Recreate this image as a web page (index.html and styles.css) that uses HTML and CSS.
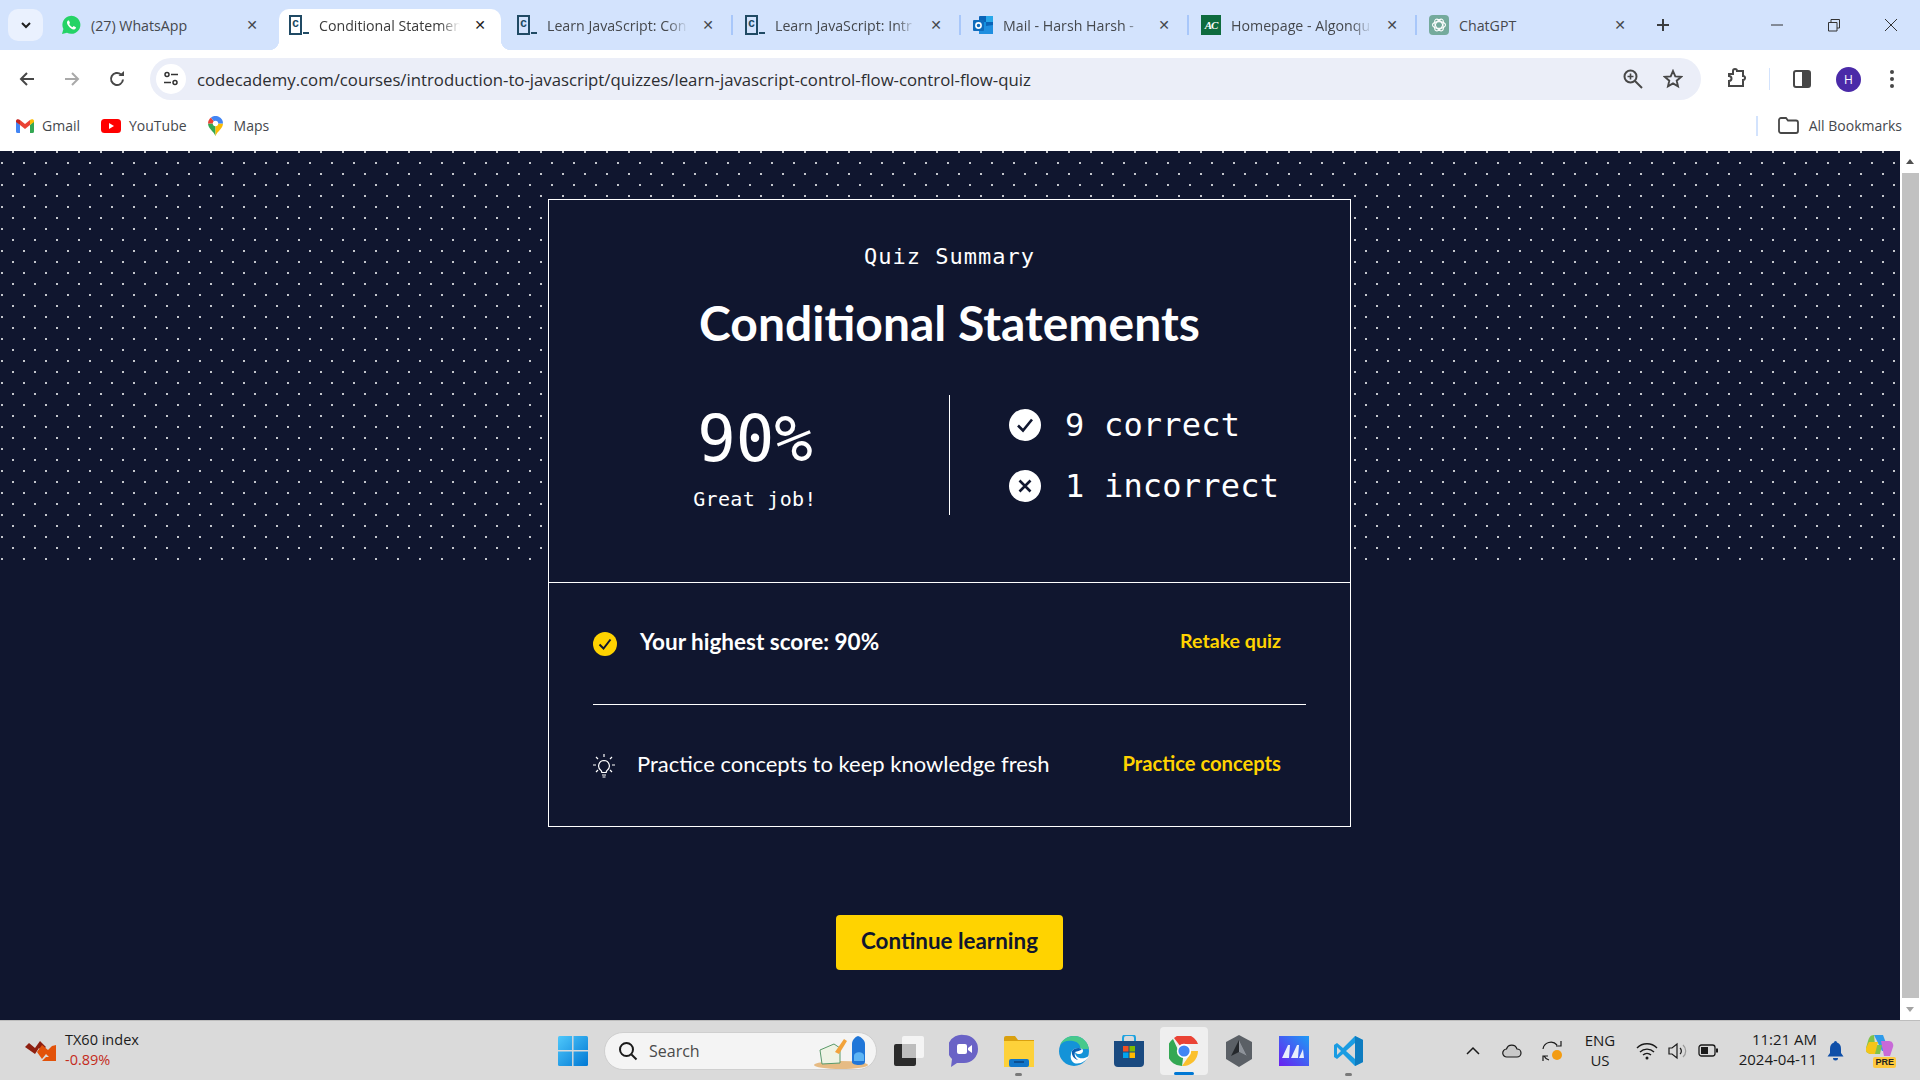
FILE: index.html
```html
<!DOCTYPE html>
<html>
	<head>
		<meta charset="utf-8" />
		<title>Conditional Statements</title>
		<link rel="stylesheet" href="styles.css">
	</head>
	<body>
	<!-- browser tabs -->
	<div class="tabstrip">
		<div class="tab-search"><svg width="14" height="14" viewBox="0 0 14 14"><path d="M3 5l4 4 4-4" fill="none" stroke="#1f1f1f" stroke-width="2"/></svg></div>
		<div class="tab">
			<svg class="fav" width="20" height="20" viewBox="0 0 20 20"><path d="M1 19l1.400-5A9 9 0 1 1 6 17.700z" fill="#25d366"/><path d="M7 5.500c-1.500 1-1.400 3 .5 5.500s4 3.800 5.800 3.400c1.300-.3 1.800-1.400 1.600-2.200l-2.300-1.100-1 1.200c-1.300-.5-2.700-1.800-3.400-3.200l.8-1.100-1-2.400z" fill="#fff"/></svg>
			<span class="tab-title">(27) WhatsApp</span><span class="tab-x">✕</span>
		</div>
		<div class="tab active">
			<span class="fav cc"><b>c</b><i></i></span>
			<span class="tab-title fade">Conditional Statemen</span><span class="tab-x">✕</span>
		</div>
		<div class="tab sep">
			<span class="fav cc"><b>c</b><i></i></span>
			<span class="tab-title fade">Learn JavaScript: Con</span><span class="tab-x">✕</span>
		</div>
		<div class="tab sep">
			<span class="fav cc"><b>c</b><i></i></span>
			<span class="tab-title fade">Learn JavaScript: Intr</span><span class="tab-x">✕</span>
		</div>
		<div class="tab sep">
			<svg class="fav" width="20" height="20" viewBox="0 0 20 20"><rect x="6" y="1" width="14" height="18" rx="1" fill="#0a64b8"/><rect x="13" y="1" width="7" height="6" fill="#28a8ea"/><rect x="6" y="7" width="7" height="6" fill="#1490df"/><path d="M6 12l14-2v9H6z" fill="#1f8fe0"/><rect x="0" y="5" width="11" height="11" rx="1" fill="#0f6cbd"/><circle cx="5.500" cy="10.500" r="2.600" fill="none" stroke="#fff" stroke-width="1.600"/></svg>
			<span class="tab-title fade">Mail - Harsh Harsh - </span><span class="tab-x">✕</span>
		</div>
		<div class="tab sep">
			<span class="fav ac">AC</span>
			<span class="tab-title fade">Homepage - Algonqu</span><span class="tab-x">✕</span>
		</div>
		<div class="tab sep">
			<svg class="fav" width="20" height="20" viewBox="0 0 20 20"><rect width="20" height="20" rx="4" fill="#74aa9c"/><g fill="none" stroke="#fff" stroke-width="1.100"><ellipse cx="10" cy="10" rx="6.500" ry="3.400"/><ellipse cx="10" cy="10" rx="6.500" ry="3.400" transform="rotate(60 10 10)"/><ellipse cx="10" cy="10" rx="6.500" ry="3.400" transform="rotate(120 10 10)"/></g></svg>
			<span class="tab-title">ChatGPT</span><span class="tab-x">✕</span>
		</div>
		<div class="new-tab"><svg width="16" height="16" viewBox="0 0 16 16"><path d="M8 2v12M2 8h12" stroke="#3b3d40" stroke-width="2"/></svg></div>
		<div class="win-controls">
			<svg width="14" height="14" viewBox="0 0 14 14"><path d="M1 7h12" stroke="#333" stroke-width="1"/></svg>
			<svg width="14" height="14" viewBox="0 0 14 14"><path d="M1.500 4.500h8.500v8.500H1.500zM4 4.500V1.500h8.500V10H10" fill="none" stroke="#333" stroke-width="1"/></svg>
			<svg width="14" height="14" viewBox="0 0 14 14"><path d="M1 1l12 12M13 1L1 13" stroke="#333" stroke-width="1"/></svg>
		</div>
	</div>

	<!-- address bar -->
	<div class="toolbar">
		<div class="nav-icons">
			<svg width="18" height="18" viewBox="0 0 18 18"><path d="M16 9H3M9 3L3 9l6 6" fill="none" stroke="#474747" stroke-width="2"/></svg>
			<svg width="18" height="18" viewBox="0 0 18 18"><path d="M2 9h13M9 3l6 6-6 6" fill="none" stroke="#a9a9a9" stroke-width="2"/></svg>
			<svg width="18" height="18" viewBox="0 0 18 18"><path d="M15 9.500A6 6 0 1 1 13 4.500" fill="none" stroke="#474747" stroke-width="2"/><path d="M10.500 6H16V1z" fill="#474747"/></svg>
		</div>
		<div class="omnibox">
			<span class="tune"><svg width="16" height="16" viewBox="0 0 16 16"><circle cx="4" cy="3.500" r="2" fill="none" stroke="#333" stroke-width="1.500"/><path d="M8 3.500h7M1 11.500h7" stroke="#333" stroke-width="1.500"/><circle cx="12" cy="11.500" r="2" fill="none" stroke="#333" stroke-width="1.500"/></svg></span>
			<span class="url">codecademy.com/courses/introduction-to-javascript/quizzes/learn-javascript-control-flow-control-flow-quiz</span>
			<svg class="zoom-ic" width="22" height="22" viewBox="0 0 22 22"><circle cx="8.500" cy="8.500" r="6" fill="none" stroke="#474747" stroke-width="2"/><path d="M13 13l7 7" stroke="#474747" stroke-width="2"/><path d="M8.500 5.500v6M5.500 8.500h6" stroke="#474747" stroke-width="1.600"/></svg>
			<svg width="20" height="20" viewBox="0 0 20 20"><path d="M10 2l2.300 5.400 5.800.5-4.400 3.800 1.300 5.700-5-3-5 3 1.300-5.700L1.900 7.900l5.800-.5z" fill="none" stroke="#474747" stroke-width="1.900"/></svg>
		</div>
		<div class="tool-icons">
			<svg width="22" height="22" viewBox="0 0 22 22"><path d="M3 7h4V4a2 2 0 0 1 4 0v0h6v5a2 2 0 0 1 2 2.500 2 2 0 0 1-2 1.500v6H3v-5a2.500 2.500 0 0 0 0-5z" transform="translate(0 -1)" fill="none" stroke="#474747" stroke-width="2"/></svg>
			<span class="tool-sep"></span>
			<svg width="20" height="20" viewBox="0 0 20 20"><rect x="2" y="2" width="16" height="16" rx="2" fill="none" stroke="#474747" stroke-width="2"/><rect x="10" y="2" width="8" height="16" fill="#474747"/></svg>
			<span class="avatar">H</span>
			<svg width="6" height="20" viewBox="0 0 6 20"><circle cx="3" cy="3" r="2" fill="#474747"/><circle cx="3" cy="10" r="2" fill="#474747"/><circle cx="3" cy="17" r="2" fill="#474747"/></svg>
		</div>
	</div>

	<!-- bookmarks -->
	<div class="bookmarks">
		<div class="bm bm-gmail">
			<svg width="18" height="14" viewBox="0 0 18 14"><path d="M0 2v10.500A1.500 1.500 0 0 0 1.500 14H4V6z" fill="#4285f4"/><path d="M18 2v10.500a1.500 1.500 0 0 1-1.500 1.500H14V6z" fill="#34a853"/><path d="M4 6l5 4 5-4V1l-5 4-5-4z" fill="#ea4335"/><path d="M0 2c0-2 2.500-2.500 4-1v5L0 3z" fill="#c5221f"/><path d="M18 2c0-2-2.500-2.500-4-1v5l4-3z" fill="#fbbc04"/></svg>
			<span>Gmail</span>
		</div>
		<div class="bm bm-yt">
			<svg width="20" height="14" viewBox="0 0 20 14"><rect width="20" height="14" rx="3.500" fill="#f00"/><path d="M8 4l5 3-5 3z" fill="#fff"/></svg>
			<span>YouTube</span>
		</div>
		<div class="bm bm-maps">
			<svg width="15" height="20" viewBox="0 0 15 20"><path d="M7.500 20C6 15.500 0 12.500 0 7.500L7.500 7.500z" fill="#34a853"/><path d="M7.500 20c1.500-4.500 7.500-7.500 7.500-12.500H7.500z" fill="#fbbc04"/><path d="M0 7.500A7.500 7.500 0 0 1 3 1.500L7.500 7.500z" fill="#ea4335"/><path d="M3 1.500A7.500 7.500 0 0 1 15 7.500H7.500z" fill="#4285f4"/><circle cx="7.500" cy="7.500" r="2.700" fill="#fff"/></svg>
			<span>Maps</span>
		</div>
		<div class="bm-all">
			<span class="bm-sep"></span>
			<svg width="21" height="17" viewBox="0 0 21 17"><path d="M1 3a2 2 0 0 1 2-2h5l2 2.500h8a2 2 0 0 1 2 2V14a2 2 0 0 1-2 2H3a2 2 0 0 1-2-2z" fill="none" stroke="#474747" stroke-width="1.800"/></svg>
			<span>All Bookmarks</span>
		</div>
	</div>

	<div class="viewport">
		<div class="main">
			<div class="dots"></div>
			<div class="card">
				<div class="card-top">
					<div class="quiz-label">Quiz Summary</div>
					<h1 class="quiz-title">Conditional Statements</h1>
					<div class="stats">
						<div class="score">
							<div class="score-num">90%</div>
							<div class="score-note">Great job!</div>
						</div>
						<div class="tally">
							<div class="tally-row">
								<svg width="32" height="32" viewBox="0 0 32 32"><circle cx="16" cy="16" r="16" fill="#fff"/><path d="M9 16.500l5 5 9-11" fill="none" stroke="#10162f" stroke-width="2.600"/></svg>
								<span>9 correct</span>
							</div>
							<div class="tally-row">
								<svg width="32" height="32" viewBox="0 0 32 32"><circle cx="16" cy="16" r="16" fill="#fff"/><path d="M10.500 10.500l11 11M21.500 10.500l-11 11" fill="none" stroke="#10162f" stroke-width="2.600"/></svg>
								<span>1 incorrect</span>
							</div>
						</div>
					</div>
				</div>
				<div class="card-bottom">
					<div class="row row-first">
						<svg width="24" height="24" viewBox="0 0 24 24"><circle cx="12" cy="12" r="12" fill="#ffd300"/><path d="M6.500 12.500l4 4 7-9" fill="none" stroke="#10162f" stroke-width="2"/></svg>
						<span class="row-text strong">Your highest score: 90%</span>
						<a class="row-link">Retake quiz</a>
					</div>
					<div class="row">
						<svg class="bulb" width="22" height="24" viewBox="0 0 22 24"><path d="M11 6.500a5.500 5.500 0 0 0-3 10c.6.5.8 1 .8 2h4.400c0-1 .2-1.500.8-2a5.500 5.500 0 0 0-3-10z" fill="none" stroke="#fff" stroke-width="1.200"/><path d="M9 21h4M9.500 23h3M11 0v3M3 3l2 2M19 3l-2 2M0 11h3M19 11h3M3 18l2-2M19 18l-2-2" stroke="#fff" stroke-width="1.200"/></svg>
						<span class="row-text">Practice concepts to keep knowledge fresh</span>
						<a class="row-link">Practice concepts</a>
					</div>
				</div>
			</div>
			<button class="continue">Continue learning</button>
		</div>
		<div class="scrollbar">
			<svg width="20" height="20" viewBox="0 0 20 20"><path d="M6 13l4-5 4 5z" fill="#505050"/></svg>
			<div class="thumb"></div>
			<svg width="20" height="20" viewBox="0 0 20 20"><path d="M6 7l4 5 4-5z" fill="#a3a3a3"/></svg>
		</div>
	</div>

	<!-- windows taskbar -->
	<div class="taskbar">
		<div class="widget">
			<svg width="32" height="22" viewBox="0 0 32 22"><path d="M0 7l4-4 6 5 5-7 6 6-4 4-3-3-4 6z" fill="#8e1f10"/><path d="M12 12l5-7 6 5 4-4 4-1v16H17l4-4 3 0-3-3-4 5z" fill="#e2520a"/></svg>
			<div class="widget-text">
				<div>TX60 index</div>
				<div class="widget-red">-0.89%</div>
			</div>
		</div>
		<div class="task-center">
			<svg class="win-logo" width="30" height="30" viewBox="0 0 30 30"><defs><linearGradient id="w1" x1="0" y1="0" x2="1" y2="1"><stop offset="0" stop-color="#4fc8fb"/><stop offset="1" stop-color="#0078d4"/></linearGradient></defs><rect width="30" height="30" rx="1.500" fill="url(#w1)"/><path d="M14.800 0v30M0 14.800h30" stroke="#dadada" stroke-width="1.400"/></svg>
			<div class="search">
				<svg width="20" height="20" viewBox="0 0 20 20"><circle cx="8.500" cy="8.500" r="6.500" fill="none" stroke="#1a1a1a" stroke-width="2"/><path d="M13.500 13.500l5 5" stroke="#1a1a1a" stroke-width="2"/></svg>
				<span>Search</span>
				<svg class="search-art" width="56" height="38" viewBox="0 0 56 38"><ellipse cx="27" cy="33" rx="27" ry="4" fill="#e6bb84"/><path d="M6 18l14-6 6 4v15l-18 1z" fill="#eef3e4" stroke="#5a9a6a"/><path d="M21 20l9-13 3 2-8 13z" fill="#f2a33b"/><path d="M38 30V12c0-4 3-7 6-8 3 1 7 4 7 8v18c0 2-2 3-6 3s-7-1-7-3z" fill="#1f76d8"/><path d="M40 24c0-5 10-5 10 0v5H40z" fill="#5db4f4"/></svg>
			</div>
			<div class="slot slot-first">
				<svg width="30" height="30" viewBox="0 0 30 30"><rect x="8" y="0" width="22" height="22" rx="2" fill="#f4f4f4"/><path d="M0 10a2 2 0 0 1 2-2h6v14h14v6a2 2 0 0 1-2 2H2a2 2 0 0 1-2-2z" fill="#2b2b2b"/><rect x="8" y="8" width="14" height="14" fill="#bdbdbd"/></svg>
			</div>
			<div class="slot">
				<svg width="30" height="34" viewBox="0 0 30 34"><path d="M15 1a14 14 0 0 1 0 28H8l-6 4 1-8A14 14 0 0 1 15 1z" fill="#6a63c6"/><rect x="8" y="10" width="10" height="10" rx="2" fill="#fff"/><path d="M19 14l4-3v8l-4-3z" fill="#fff"/></svg>
			</div>
			<div class="slot slot-open">
				<svg width="30" height="32" viewBox="0 0 30 32"><path d="M0 3a2 2 0 0 1 2-2h9l3 4h16v6H0z" fill="#d9a00f"/><path d="M0 6h30v26H0z" fill="#fdd13a"/><rect x="5" y="24" width="20" height="8" rx="2" fill="#1176c9"/><rect x="10" y="26" width="10" height="2" fill="#0b4f92"/></svg>
			</div>
			<div class="slot">
				<svg width="30" height="30" viewBox="0 0 30 30"><circle cx="15" cy="15" r="15" fill="#1493d8"/><path d="M30 15c0-9-7-15-15-15C8 0 3 4 1 9c3-4 8-5 13-4 5 1 8 4 7 8h9z" fill="#47c98b"/><path d="M12 18c0-4 4-6 8-6 4 0 5 3 3 5s-6 1-7-1c0 5 6 9 14 4-3 5-9 9-15 7-3-2-4-5-3-9z" fill="#fff"/><path d="M13 15c2-3 7-4 10-2-2 2-5 2-7 3-1 3 0 6 3 8-4-1-7-5-6-9z" fill="#0b5fb4"/></svg>
			</div>
			<div class="slot">
				<svg width="30" height="32" viewBox="0 0 30 32"><path d="M9 6V3a3 3 0 0 1 3-3h6a3 3 0 0 1 3 3v3" fill="none" stroke="#1ea3e0" stroke-width="2"/><path d="M0 6h30v22a4 4 0 0 1-4 4H4a4 4 0 0 1-4-4z" fill="#1a4a80"/><rect x="9" y="11" width="5.500" height="5.500" fill="#f25022"/><rect x="15.500" y="11" width="5.500" height="5.500" fill="#7fba00"/><rect x="9" y="17.500" width="5.500" height="5.500" fill="#00a4ef"/><rect x="15.500" y="17.500" width="5.500" height="5.500" fill="#ffb900"/></svg>
			</div>
			<div class="slot slot-active">
				<svg width="30" height="30" viewBox="0 0 30 30"><path d="M15 15L5 2A15 15 0 0 1 29 8H15z" fill="#ea4335"/><path d="M15 15H29A15 15 0 0 1 13 30l7-10z" fill="#fbc02d"/><path d="M15 15l-2 15A15 15 0 0 1 4 3l6 13z" fill="#34a853"/><circle cx="15" cy="15" r="7.200" fill="#fff"/><circle cx="15" cy="15" r="5.600" fill="#4285f4"/></svg>
			</div>
			<div class="slot">
				<svg width="28" height="32" viewBox="0 0 28 32"><path d="M14 0l13 7v17l-13 8-13-8V7z" fill="#5b6066"/><path d="M14 5l8 16-8-4-8 4z" fill="#25282c"/><path d="M14 5l8 16-8-4z" fill="#8e939a"/></svg>
			</div>
			<div class="slot">
				<svg width="30" height="30" viewBox="0 0 30 30"><defs><linearGradient id="m1" x1="0" y1="1" x2="1" y2="0"><stop offset="0" stop-color="#6a1ff0"/><stop offset="1" stop-color="#1e9bf5"/></linearGradient></defs><rect width="30" height="30" fill="url(#m1)"/><path d="M3 22l6-13h2l-1 13zM12 22l6-13h2l-1 13zM20 22l4-9 1 9z" fill="#e7eefc"/></svg>
			</div>
			<div class="slot slot-open">
				<svg width="30" height="30" viewBox="0 0 30 30"><path d="M21 0l8 4v22l-8 4L9 18l-6 5-3-2V9l3-2 6 5z" fill="#1a9ce2"/><path d="M21 0l8 4v22l-8 4z" fill="#0e7cc0"/><path d="M21 7v16l-9-8z" fill="#d9d9d9"/><path d="M3 11v8l4-4z" fill="#d9d9d9"/></svg>
			</div>
		</div>
		<div class="tray">
			<svg class="tray-chev" width="14" height="9" viewBox="0 0 14 9"><path d="M1 8l6-6 6 6" fill="none" stroke="#1a1a1a" stroke-width="1.500"/></svg>
			<svg class="tray-cloud" width="20" height="14" viewBox="0 0 20 14"><path d="M5 13a4 4 0 0 1-.5-8A5.500 5.500 0 0 1 15 5a4 4 0 0 1 0 8z" fill="#c9c9c9" stroke="#1a1a1a" stroke-width="1.200"/></svg>
			<svg class="tray-sync" width="22" height="22" viewBox="0 0 22 22"><path d="M2 9a8 8 0 0 1 14-4M20 1v5h-5M2 21v-5h5M3 16a8 8 0 0 0 5 4" fill="none" stroke="#1a1a1a" stroke-width="1.200"/><circle cx="16" cy="15" r="5" fill="#f39c12"/></svg>
			<div class="lang"><div>ENG</div><div>US</div></div>
			<svg class="tray-wifi" width="22" height="18" viewBox="0 0 22 18"><path d="M1 6a14 14 0 0 1 20 0M4 10a10 10 0 0 1 14 0M7 13a6 6 0 0 1 8 0" fill="none" stroke="#1a1a1a" stroke-width="1.400"/><circle cx="11" cy="16" r="1.500" fill="#1a1a1a"/></svg>
			<svg class="tray-vol" width="20" height="18" viewBox="0 0 20 18"><path d="M1 6h3l5-4v14l-5-4H1z" fill="none" stroke="#1a1a1a" stroke-width="1.200"/><path d="M12 6a4 4 0 0 1 0 6" fill="none" stroke="#1a1a1a" stroke-width="1.200"/><path d="M15 3a8 8 0 0 1 0 12" fill="none" stroke="#9a9a9a" stroke-width="1.200"/></svg>
			<svg class="tray-batt" width="20" height="13" viewBox="0 0 20 13"><rect x="1" y="1" width="16" height="11" rx="2.500" fill="none" stroke="#1a1a1a" stroke-width="1.300"/><rect x="3" y="3" width="7" height="7" fill="#1a1a1a"/><rect x="18" y="4.500" width="2" height="4" fill="#1a1a1a"/></svg>
			<div class="clock"><div>11:21 AM</div><div>2024-04-11</div></div>
			<svg class="tray-bell" width="17" height="20" viewBox="0 0 17 20"><path d="M8.500 0a1.500 1.500 0 0 1 1.500 1.500C13 2.500 14 5 14 8v4l2.500 3.500H.5L3 12V8c0-3 1-5.500 4-6.500A1.500 1.500 0 0 1 8.500 0z" fill="#0f4fa8"/><path d="M6 17h5a2.500 2.500 0 0 1-5 0z" fill="#0f4fa8"/></svg>
			<div class="copilot">
				<svg width="28" height="26" viewBox="0 0 28 26"><path d="M8 1h9l6 16h-7z" fill="#2f9bea"/><path d="M15 7h8c3 0 5 3 4 6l-3 9h-6z" fill="#c86ad8"/><path d="M8 1C4 1 3 4 2 7L0 14c-1 4 2 6 5 6h9l2-9H9z" fill="#7fc34b"/><path d="M0 14l3-6h9l-3 12H5c-3 0-6-2-5-6z" fill="#f5c518"/></svg>
				<span class="pre">PRE</span>
			</div>
		</div>
	</div>
	</body>
</html>
```

FILE: styles.css
```css
*{margin: 0;padding: 0;box-sizing: border-box;}
html,body{width: 1920px;height: 1080px;overflow: hidden;}
body{display: flex;flex-direction: column;font-family: "Open Sans",sans-serif;background: #fff;}

/* tabs */
.tabstrip{height: 50px;background: #d3e3fd;display: flex;align-items: flex-start;flex: none;}
.tab-search{width: 35px;height: 32px;margin: 9px 4px 0 8px;border-radius: 10px;background: #eaf1fe;display: flex;align-items: center;justify-content: center;flex: none;}
.tab{width: 228px;height: 41px;margin-top: 9px;padding: 0 9px 9px 14px;display: flex;align-items: center;position: relative;flex: none;color: #45484d;}
.tab.active{background: #fff;color: #3a3a3a;border-radius: 10px 10px 0 0;width: 222px;margin-left: 4px;margin-right: 2px;padding-left: 10px;padding-right: 7px;}
.tab.active:before,.tab.active:after{content: "";position: absolute;bottom: 0;width: 10px;height: 10px;background: radial-gradient(circle at 0 0,transparent 10px,#fff 10.500px);}
.tab.active:before{left: -10px;}
.tab.active:after{right: -10px;transform: scaleX(-1);}
.tab.sep:before{content: "";position: absolute;left: 0;top: 6px;width: 2px;height: 20px;background: #a8c7fa;}
.tab.active + .tab.sep:before{display: none;}
.fav{flex: none;margin-right: 10px;}
.cc{width: 20px;height: 20px;display: flex;align-items: flex-end;}
.cc b{width: 13px;height: 20px;border: 2px solid #204a64;font: bold 12px/15px "Liberation Mono",monospace;text-align: center;color: #204a64;}
.cc i{width: 6px;height: 2px;background: #204a64;margin-left: 1px;margin-bottom: 1px;}
.ac{width: 20px;height: 20px;background: #0e6b3e;color: #fff;font: bold italic 11px/20px "Liberation Serif",serif;text-align: center;letter-spacing: -1px;}
.tab-title{flex: 1;font-size: 14.200px;white-space: nowrap;overflow: hidden;}
.tab-title.fade{-webkit-mask-image: linear-gradient(to right,#000 82%,transparent 96%);mask-image: linear-gradient(to right,#000 82%,transparent 96%);}
.tab-x{width: 28px;flex: none;text-align: center;font: 14px "DejaVu Sans",sans-serif;color: #45484d;}
.tab.active .tab-x{color: #1f1f1f;}
.new-tab{width: 30px;height: 41px;margin-top: 9px;margin-left: 5px;display: flex;align-items: center;justify-content: center;flex: none;position: relative;}
.new-tab svg{margin-top: -10px;}
.win-controls{margin-left: auto;width: 150px;height: 50px;display: flex;align-items: center;justify-content: space-between;padding: 0 22px 0 0;}

/* address bar */
.toolbar{height: 50px;background: #fff;border-radius: 12px 12px 0 0;display: flex;align-items: flex-start;flex: none;padding-top: 8px;}
.nav-icons{width: 150px;height: 42px;padding: 0 24px 0 18px;display: flex;align-items: center;justify-content: space-between;flex: none;}
.omnibox{width: 1551px;height: 42px;border-radius: 21px;background: #ebeef8;display: flex;align-items: center;padding: 0 18px 0 6px;flex: none;}
.tune{width: 30px;height: 30px;border-radius: 50%;background: #fff;display: flex;align-items: center;justify-content: center;flex: none;margin-right: 11px;}
.url{flex: 1;font-size: 16.750px;color: #2b2d31;white-space: nowrap;margin-top: 1px;}
.zoom-ic{margin-right: 19px;}
.tool-icons{flex: 1;height: 42px;display: flex;align-items: center;padding: 0 0 0 25px;}
.tool-sep{width: 1px;height: 22px;background: #d3e3fd;margin: 0 22px 0 21px;}
.avatar{width: 25px;height: 25px;border-radius: 50%;background: #4a2aa8;color: #fff;font-size: 12px;line-height: 25px;text-align: center;margin: 0 28px 0 24px;}

/* bookmarks */
.bookmarks{height: 51px;background: #fff;display: flex;align-items: center;flex: none;font-size: 14px;color: #45484d;}
.bm{display: flex;align-items: center;}
.bm-gmail{margin-left: 16px;gap: 8px;}
.bm-yt{margin-left: 21px;gap: 8px;}
.bm-maps{margin-left: 21px;gap: 11px;}
.bm-all{margin-left: auto;display: flex;align-items: center;gap: 10px;padding-right: 18px;}
.bm-sep{width: 2px;height: 20px;background: #d3e3fd;margin-right: 10px;}

/* page */
.viewport{height: 869px;display: flex;flex: none;}
.main{width: 1900px;background: #10162f;position: relative;display: flex;flex-direction: column;align-items: center;padding-top: 48px;}
.dots{position: absolute;left: 0;top: 0;width: 100%;height: 409px;
background-image: radial-gradient(circle at 1px 1px,#c4c6cd 1px,transparent 1.200px),radial-gradient(circle at 1px 1px,#c4c6cd 1px,transparent 1.200px);
background-size: 22px 22px;background-position: 12px 0,1px 11px;}
.card{width: 803px;height: 628px;margin-right: 1px;border: 1px solid #fff;background: #10162f;position: relative;color: #fff;flex: none;}
.card-top{height: 383px;display: flex;flex-direction: column;align-items: center;padding-top: 41px;border-bottom: 1px solid #fff;}
.quiz-label{font: 22px/32px "DejaVu Sans Mono",monospace;letter-spacing: 1px;}
.quiz-title{font: bold 48px/56px Lato,sans-serif;margin-top: 22px;}
.stats{width: 100%;height: 120px;margin-top: 44px;display: flex;}
.score{width: 401px;border-right: 1px solid #fff;padding: 12px 0 0 12px;text-align: center;flex: none;}
.score-num{font: 64px/64px "DejaVu Sans Mono",monospace;}
.score-note{font: 20px/24px "DejaVu Sans Mono",monospace;letter-spacing: .300px;margin-top: 16px;}
.tally{flex: 1;display: flex;flex-direction: column;justify-content: center;gap: 29px;padding-left: 59px;}
.tally-row{display: flex;align-items: center;gap: 24px;font: 32px/32px "DejaVu Sans Mono",monospace;letter-spacing: .200px;}
.card-bottom{margin: 0 44px;height: 243px;display: flex;flex-direction: column;}
.row{height: 121px;display: flex;align-items: center;padding-right: 25px;}
.row-first{height: 122px;border-bottom: 1px solid #fff;}
.row-text{flex: 1;font: 22px/28px Lato,sans-serif;margin: -4px 0 0 22px;}
.row-first .row-text{margin-left: 23px;font-size: 22.500px;}
.strong{font-weight: bold;}
.row-link{font: bold 20.200px/28px Lato,sans-serif;color: #ffd300;margin-top: -5px;}
.row-first .row-link{font-size: 19.600px;}
.continue{width: 227px;height: 55px;margin: 88px 1px 0 0;background: #ffd300;color: #10162f;border: none;border-radius: 4px;font: bold 22.400px/46px Lato,sans-serif;padding-bottom: 3px;flex: none;}
.scrollbar{width: 20px;background: #fff;display: flex;flex-direction: column;align-items: center;flex: none;}
.thumb{width: 17px;height: 825px;margin: 2px 0;background: #c1c1c1;}

/* taskbar */
.taskbar{height: 60px;background: #dadada;border-top: 1px solid #bdbdbd;display: flex;align-items: center;flex: none;position: relative;}
.widget{width: 558px;padding-left: 25px;display: flex;align-items: center;gap: 8px;flex: none;}
.widget-text{font-size: 14.500px;line-height: 20px;color: #1a1a1a;margin-top: -2px;}
.widget-red{color: #c42b1c;}
.task-center{display: flex;align-items: center;flex: none;}
.win-logo{margin-right: 16px;}
.search{width: 273px;height: 38px;border-radius: 19px;background: #f4f4f4;border: 1px solid #cfcfcf;display: flex;align-items: center;padding-left: 13px;gap: 11px;font-size: 16px;color: #4a4a4a;position: relative;}
.search-art{margin-left: auto;margin-right: 6px;}
.slot{width: 55px;height: 48px;display: flex;align-items: center;justify-content: center;position: relative;flex: none;}
.slot-first{margin-left: 4px;}
.slot-open:after{content: "";position: absolute;bottom: -1px;left: 24px;width: 7px;height: 3px;border-radius: 2px;background: #7a7a7a;}
.slot-active{background: #efefef;border-radius: 4px;width: 48px;margin: 0 3.500px;}
.slot-active:after{content: "";position: absolute;bottom: 0;left: 14px;width: 20px;height: 3px;border-radius: 2px;background: #0078d4;}
.tray{flex: 1;display: flex;align-items: center;color: #1a1a1a;font-size: 15px;}
.tray-chev{margin-left: 90px;}
.tray-cloud{margin-left: 22px;}
.tray-sync{margin-left: 19px;}
.lang{width: 44px;margin: -2px 0 0 15px;text-align: center;line-height: 20px;}
.tray-wifi{margin-left: 14px;}
.tray-vol{margin-left: 10px;}
.tray-batt{margin-left: 10px;}
.clock{width: 84px;margin: -3px 0 0 15px;text-align: right;line-height: 20px;white-space: nowrap;}
.tray-bell{margin-left: 10px;}
.copilot{margin-left: 22px;position: relative;width: 30px;height: 34px;}
.pre{position: absolute;right: 0;bottom: 0;background: #ffc83d;color: #222;font: bold 9px/11px "Liberation Sans",sans-serif;padding: 0 2px;border-radius: 2px;}
```
